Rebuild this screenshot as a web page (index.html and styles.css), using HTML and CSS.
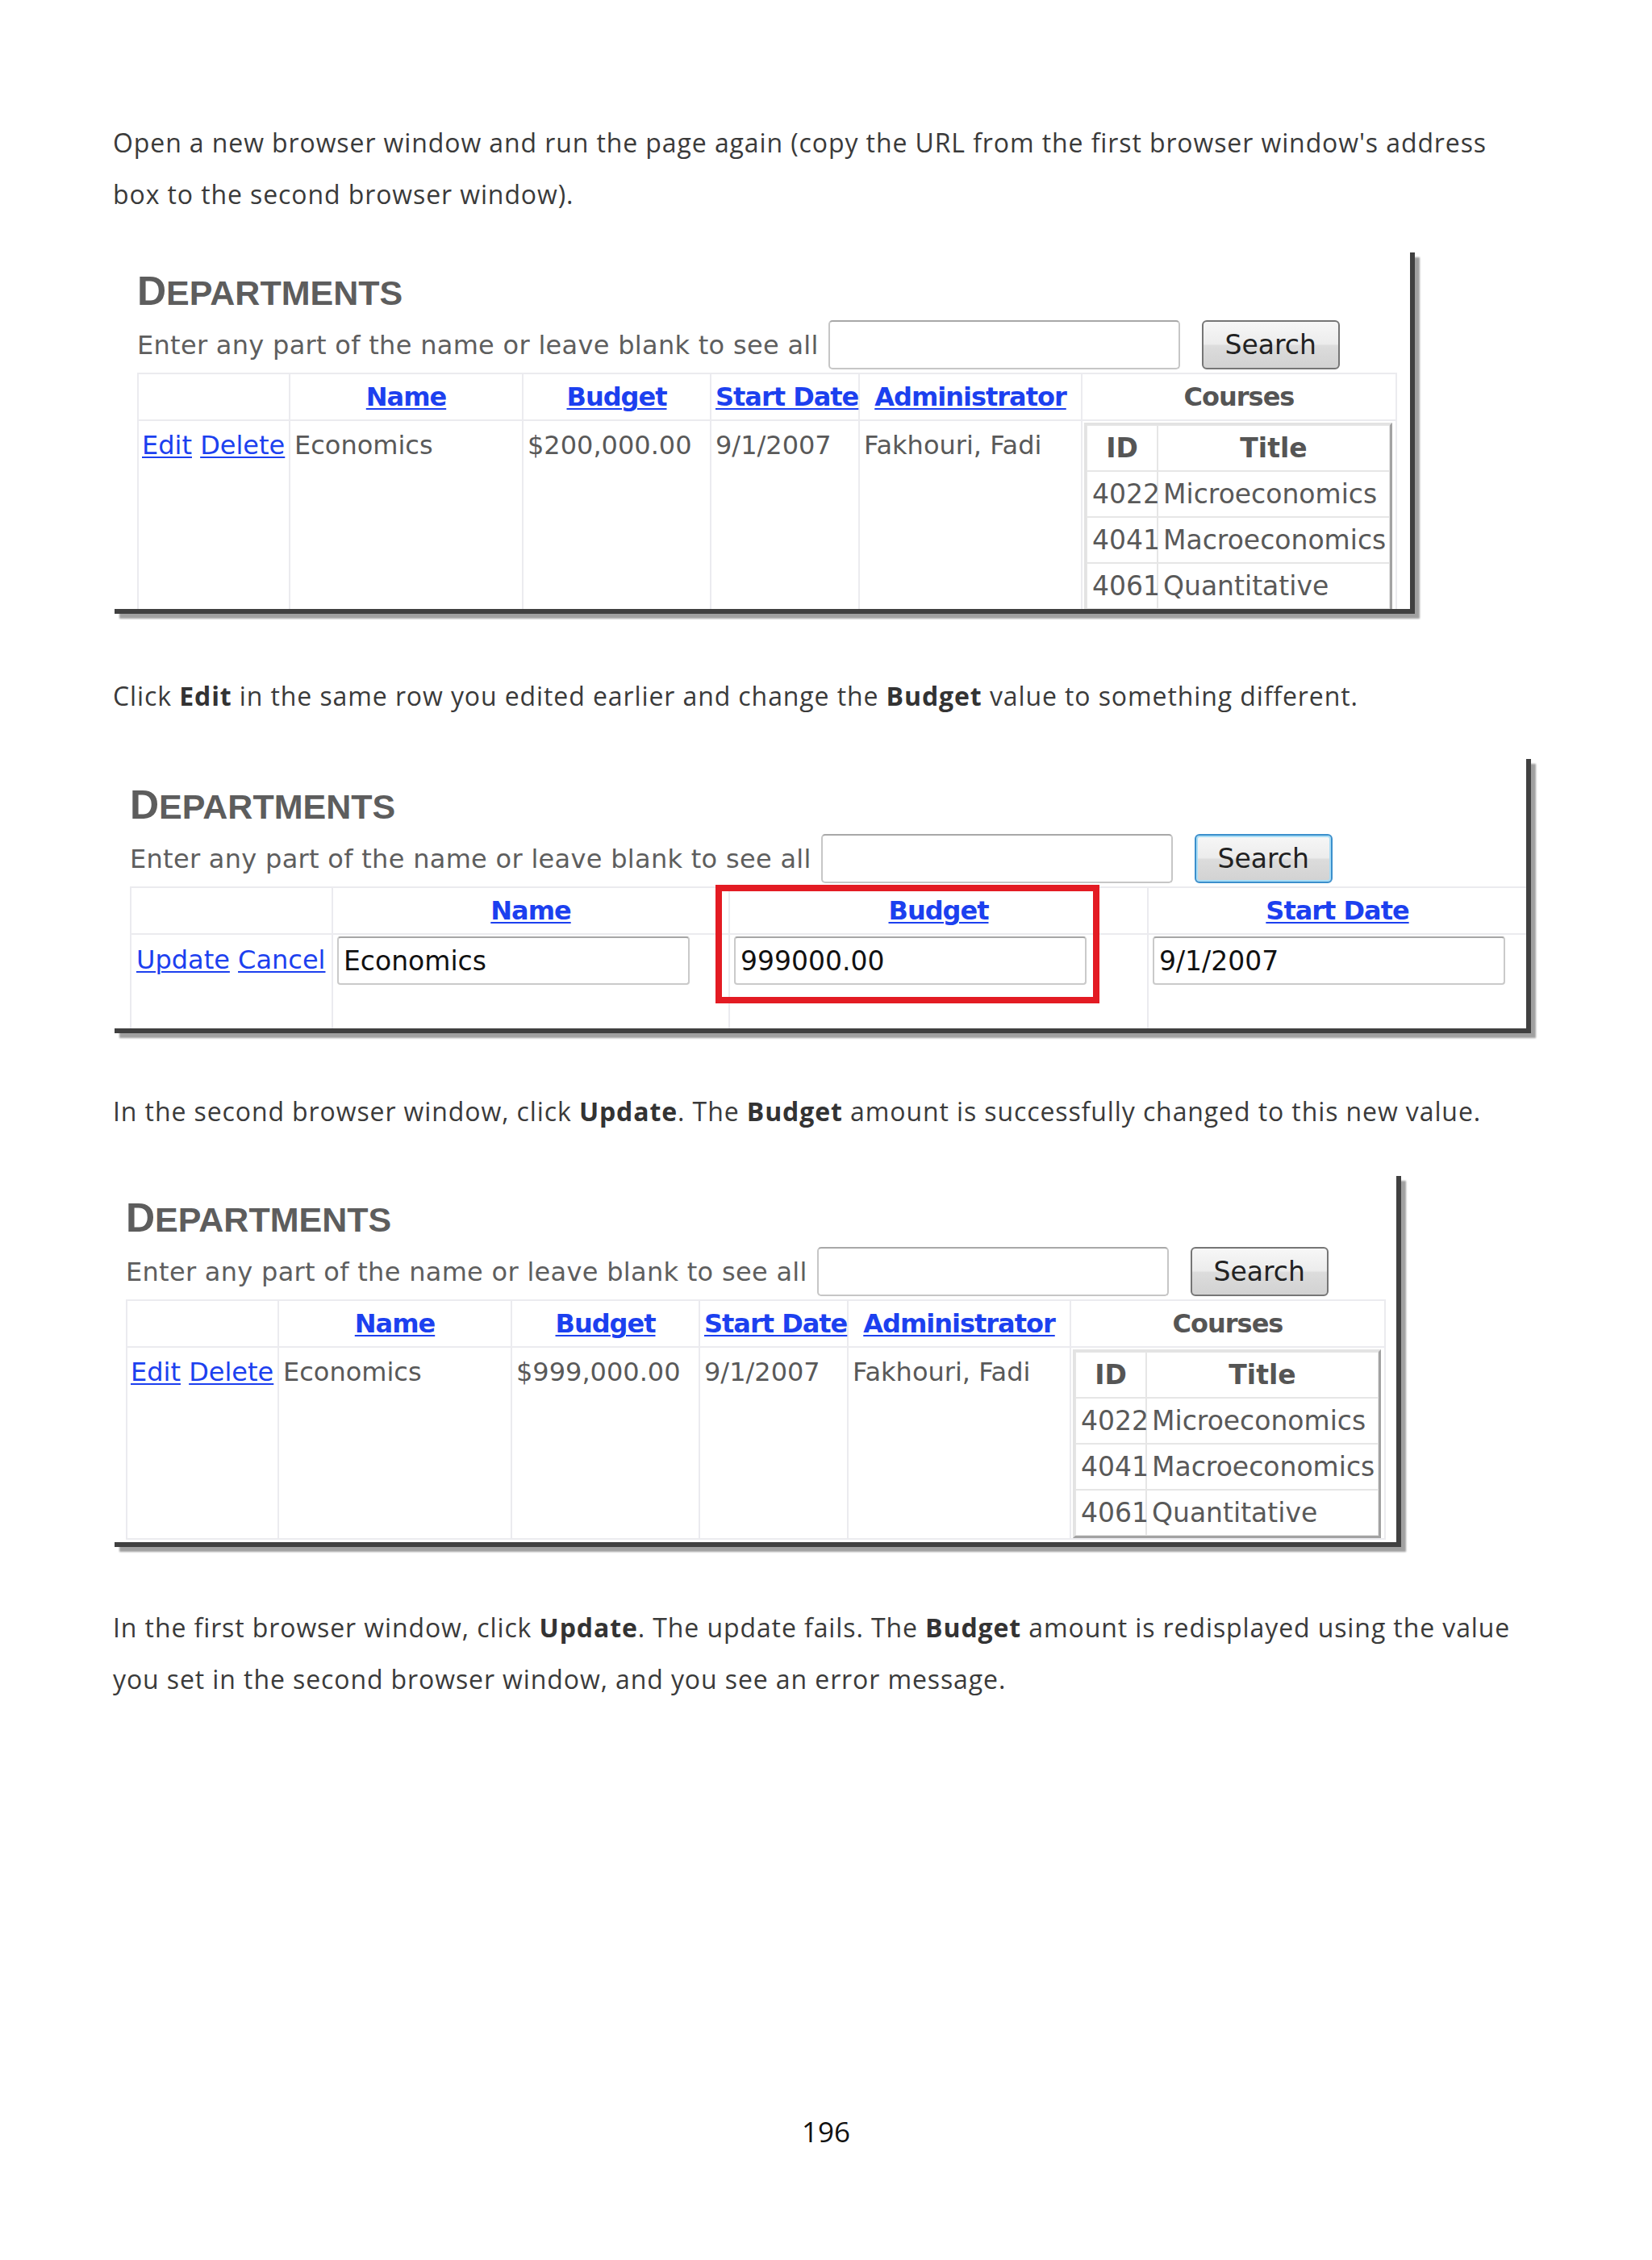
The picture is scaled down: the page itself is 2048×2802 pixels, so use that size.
FILE: index.html
```html
<!DOCTYPE html>
<html lang="en">
<head>
    <meta charset="UTF-8">
    <title>Departments - concurrency walkthrough</title>
    <link rel="stylesheet" href="styles.css">
</head>
<body>
<div class="page">
    <p class="text">Open a new browser window and run the page again (copy the URL from the first browser window's address box to the second browser window).</p>

    <!-- first window: list view -->
    <div class="shot shot-first">
        <h2 class="dept"><span class="big">D</span>EPARTMENTS</h2>
        <div class="search-row">
            <span class="search-label">Enter any part of the name or leave blank to see all</span>
            <input class="search-box" type="text">
            <button class="search-btn">Search</button>
        </div>
        <table class="grid list">
            <colgroup>
                <col class="c-act"><col class="c-name"><col class="c-budget"><col class="c-date"><col class="c-admin"><col class="c-courses">
            </colgroup>
            <tr class="head">
                <th></th>
                <th><a href="#">Name</a></th>
                <th><a href="#">Budget</a></th>
                <th><a href="#">Start Date</a></th>
                <th><a href="#">Administrator</a></th>
                <th>Courses</th>
            </tr>
            <tr>
                <td class="act"><a href="#">Edit</a> <a href="#">Delete</a></td>
                <td>Economics</td>
                <td>$200,000.00</td>
                <td>9/1/2007</td>
                <td>Fakhouri, Fadi</td>
                <td class="course-cell">
                    <table class="courses">
                        <colgroup><col class="c-id"><col></colgroup>
                        <tr><th>ID</th><th>Title</th></tr>
                        <tr><td>4022</td><td>Microeconomics</td></tr>
                        <tr><td>4041</td><td>Macroeconomics</td></tr>
                        <tr><td>4061</td><td>Quantitative</td></tr>
                    </table>
                </td>
            </tr>
        </table>
    </div>

    <p class="text gap">Click <b>Edit</b> in the same row you edited earlier and change the <b>Budget</b> value to something different.</p>

    <!-- second window: edit mode -->
    <div class="shot shot-edit">
        <h2 class="dept"><span class="big">D</span>EPARTMENTS</h2>
        <div class="search-row">
            <span class="search-label">Enter any part of the name or leave blank to see all</span>
            <input class="search-box" type="text">
            <button class="search-btn focused">Search</button>
        </div>
        <table class="grid edit">
            <colgroup>
                <col class="e-act"><col class="e-name"><col class="e-budget"><col class="e-date">
            </colgroup>
            <tr class="head">
                <th></th>
                <th><a href="#">Name</a></th>
                <th><a href="#">Budget</a></th>
                <th><a href="#">Start Date</a></th>
            </tr>
            <tr>
                <td class="act"><a href="#" class="plain">Update</a> <a href="#" class="plain">Cancel</a></td>
                <td><input class="field" type="text" value="Economics"></td>
                <td><input class="field" type="text" value="999000.00"></td>
                <td><input class="field" type="text" value="9/1/2007"></td>
            </tr>
        </table>
        <div class="mark"></div>
    </div>

    <p class="text gap">In the second browser window, click <b>Update</b>. The <b>Budget</b> amount is successfully changed to this new value.</p>

    <!-- second window after update -->
    <div class="shot shot-after">
        <h2 class="dept"><span class="big">D</span>EPARTMENTS</h2>
        <div class="search-row">
            <span class="search-label">Enter any part of the name or leave blank to see all</span>
            <input class="search-box" type="text">
            <button class="search-btn">Search</button>
        </div>
        <table class="grid list">
            <colgroup>
                <col class="c-act"><col class="c-name"><col class="c-budget"><col class="c-date"><col class="c-admin"><col class="c-courses">
            </colgroup>
            <tr class="head">
                <th></th>
                <th><a href="#">Name</a></th>
                <th><a href="#">Budget</a></th>
                <th><a href="#">Start Date</a></th>
                <th><a href="#">Administrator</a></th>
                <th>Courses</th>
            </tr>
            <tr>
                <td class="act"><a href="#">Edit</a> <a href="#">Delete</a></td>
                <td>Economics</td>
                <td>$999,000.00</td>
                <td>9/1/2007</td>
                <td>Fakhouri, Fadi</td>
                <td class="course-cell">
                    <table class="courses">
                        <colgroup><col class="c-id"><col></colgroup>
                        <tr><th>ID</th><th>Title</th></tr>
                        <tr><td>4022</td><td>Microeconomics</td></tr>
                        <tr><td>4041</td><td>Macroeconomics</td></tr>
                        <tr><td>4061</td><td>Quantitative</td></tr>
                    </table>
                </td>
            </tr>
        </table>
    </div>

    <p class="text gap">In the first browser window, click <b>Update</b>. The update fails. The <b>Budget</b> amount is redisplayed using the value you set in the second browser window, and you see an error message.</p>

    <div class="page-num">196</div>
</div>
</body>
</html>
```

FILE: styles.css
```css
body {
    margin: 0;
    background-color: #fff;
    font-family: "Open Sans", "DejaVu Sans", sans-serif;
    color: #3a3a3a;
}

.page {
    width: 2048px;
    padding: 145px 0 0 140px;
    box-sizing: border-box;
}

/* document text */
.text {
    margin: 0;
    width: 1750px;
    font-size: 32px;
    letter-spacing: 0.9px;
    line-height: 64px;
}

.text b {
    font-weight: 700;
    color: #333;
}

.page-num {
    width: 1768px;
    margin-top: 509px;
    text-align: center;
    font-size: 35px;
    line-height: 40px;
    color: #111;
}

/* screenshots */
.shot {
    position: relative;
    margin-left: -4px;
    background-color: #fff;
    box-shadow: 6px 6px 0 #404040, 12px 12px 2px #a0a0a0;
    overflow: hidden;
    box-sizing: border-box;
    font-family: "DejaVu Sans", sans-serif;
    color: #595959;
}

.shot-first {
    width: 1612px;
    height: 448px;
    margin-top: 34px;
    padding: 28px 0 0 34px;
}

.shot-edit {
    width: 1756px;
    height: 340px;
    margin-top: 40px;
    padding: 37px 0 0 25px;
}

.shot-after {
    width: 1595px;
    height: 460px;
    margin-top: 42px;
    padding: 32px 0 0 20px;
}

.shot-first + .gap { margin-top: 76px; }
.shot-edit + .gap { margin-top: 71px; }
.shot-after + .gap { margin-top: 74px; }

.dept {
    margin: 0;
    font-family: "Liberation Sans", Arial, sans-serif;
    font-size: 43px;
    line-height: 52px;
    font-weight: bold;
    color: #5d5d5d;
}

.dept .big {
    font-size: 50px;
}

.search-row {
    display: flex;
    align-items: center;
    height: 61px;
    margin-top: 8px;
}

.search-label {
    font-size: 32px;
    letter-spacing: 0.3px;
    color: #5e5e5e;
    white-space: nowrap;
}

.search-box {
    width: 436px;
    height: 61px;
    margin-left: 12px;
    border: 2px solid #c6c6c6;
    border-top-color: #a8a8a8;
    border-radius: 5px;
    box-sizing: border-box;
    background-color: #fff;
}

.search-btn {
    width: 171px;
    height: 61px;
    margin-left: 27px;
    padding: 0;
    border: 2px solid #767676;
    border-radius: 6px;
    background: linear-gradient(#f7f7f7, #ececec 48%, #dcdcdc 52%, #d2d2d2);
    font-family: "DejaVu Sans", sans-serif;
    font-size: 33px;
    color: #222;
}

.search-btn.focused {
    border-color: #3b8fcc;
    box-shadow: inset 0 0 0 2px #a9ddf6;
}

/* grid view */
.grid {
    margin-top: 4px;
    border-collapse: collapse;
    table-layout: fixed;
    font-size: 32px;
    line-height: 38px;
}

.grid th,
.grid td {
    border: 2px solid #ebebef;
    padding: 0 5px;
}

.grid tr.head th {
    height: 56px;
    text-align: center;
    vertical-align: middle;
    font-weight: bold;
    letter-spacing: -1px;
    color: #555;
    white-space: nowrap;
}

.grid td {
    vertical-align: top;
    padding-top: 11px;
    white-space: nowrap;
}

.grid a {
    color: #1c40ef;
    text-decoration: underline;
    text-decoration-thickness: 2px;
    text-underline-offset: 3px;
}

.grid td.act {
    padding-left: 4px;
}

.list {
    width: 1560px;
}

.list .c-act { width: 188px; }
.list .c-name { width: 289px; }
.list .c-budget { width: 233px; }
.list .c-date { width: 184px; }
.list .c-admin { width: 276px; }
.list .c-courses { width: 390px; }

.grid td.course-cell {
    padding: 2px 3px 0 2px;
}

/* nested courses table */
.courses {
    width: 382px;
    border-collapse: separate;
    border-spacing: 0;
    table-layout: fixed;
    border: 3px solid;
    border-color: #e3e3e3 #a2a2a2 #a2a2a2 #e3e3e3;
    font-size: 33px;
    line-height: 38px;
}

.courses .c-id { width: 88px; }

.courses th,
.courses td {
    height: 55px;
    padding: 0 0 0 6px;
    border: 1px solid #e6e6e6;
    vertical-align: middle;
    white-space: nowrap;
    text-align: left;
}

.courses th {
    padding: 0;
    text-align: center;
    font-weight: bold;
    color: #555;
}

/* edit mode */
.edit {
    width: 1731px;
}

.edit .e-act { width: 250px; }
.edit .e-name { width: 492px; }
.edit .e-budget { width: 519px; }
.edit .e-date { width: 470px; }

.edit td {
    height: 120px;
    padding: 2px 4px 0 5px;
}

.edit td.act {
    padding: 12px 0 0 6px;
}

.edit a.plain {
    color: #1c40ef;
}

.field {
    width: 437px;
    height: 60px;
    padding: 0 6px;
    border: 2px solid #cacaca;
    border-top-color: #a6a6a6;
    border-radius: 4px;
    box-sizing: border-box;
    font-family: "DejaVu Sans", sans-serif;
    font-size: 33px;
    color: #111;
}

.mark {
    position: absolute;
    left: 751px;
    top: 162px;
    width: 476px;
    height: 147px;
    border: 8px solid #e31b23;
    box-sizing: border-box;
}
```
